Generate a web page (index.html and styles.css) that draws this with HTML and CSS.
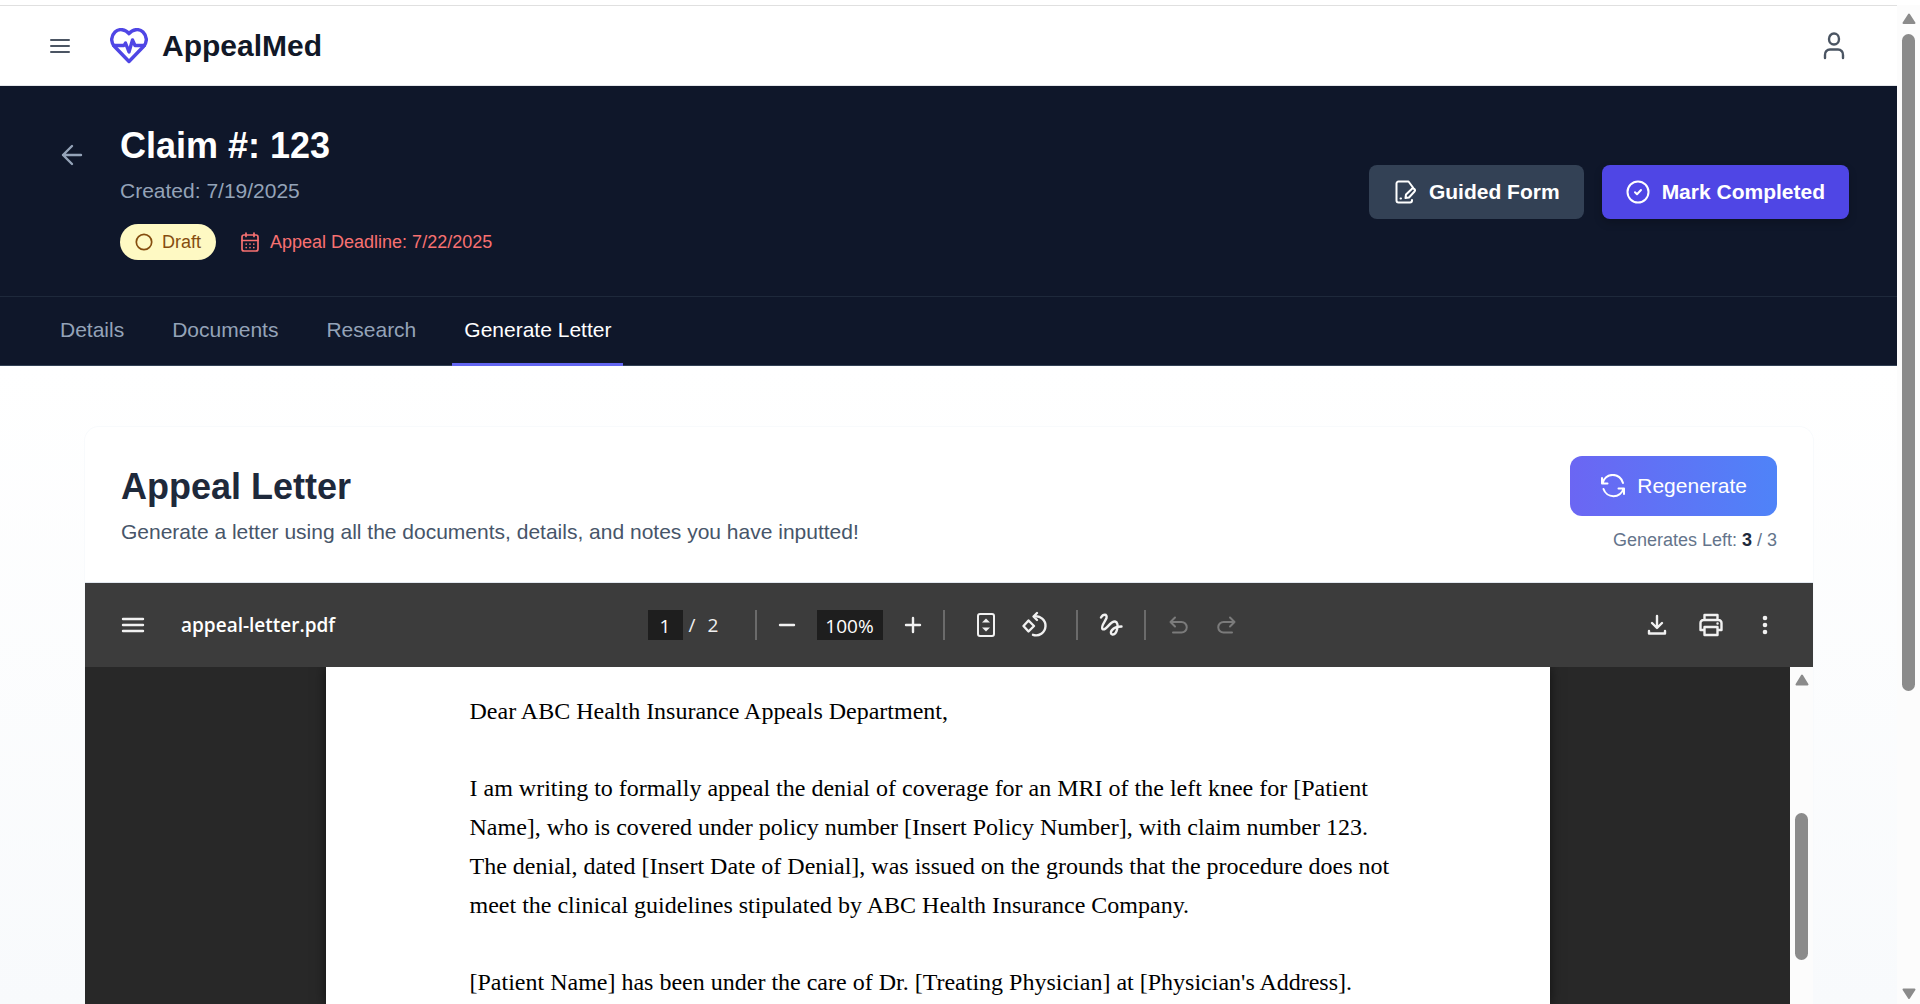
FILE: index.html
```html
<!DOCTYPE html>
<html lang="en">
<head>
<meta charset="utf-8">
<title>AppealMed</title>
<link rel="stylesheet" href="styles.css">
</head>
<body>
<div class="shell">
  <div class="content">
    <header class="topbar">
      <button class="icon-btn" aria-label="Menu">
        <svg width="24" height="24" viewBox="0 0 24 24" class="ico"><path d="M3 6h18M3 12h18M3 18h18"/></svg>
      </button>
      <a class="brand" href="#">
        <svg width="38" height="36" viewBox="0 0 38 36" class="ico ico-heart"><path d="M19 5.600C15.500 1.500 9 0 5 4C0.500 8.500 0.800 14.500 4.500 18.500L19 33.500L33.500 18.500C37.200 14.500 37.500 8.500 33 4C29 0 22.500 1.500 19 5.600Z"/><path d="M3.500 17.500H14L15.500 15L19 24L22.500 12L25 17.500H34.500"/></svg>
        <span>AppealMed</span>
      </a>
      <button class="icon-btn user" aria-label="Account">
        <svg width="30" height="30" viewBox="0 0 30 30" class="ico ico-bold"><ellipse cx="15" cy="8" rx="5" ry="5.500"/><path d="M6 27V24A5 5 0 0 1 11 18.500H19A5 5 0 0 1 24 24V27"/></svg>
      </button>
    </header>

    <section class="claim">
      <div class="claim-head">
        <button class="icon-btn back" aria-label="Back">
          <svg width="30" height="30" viewBox="0 0 30 30" class="ico ico-bold"><path d="M24 15H6M15 6L6 15L15 24"/></svg>
        </button>
        <div class="claim-info">
          <h1>Claim #: 123</h1>
          <p class="created">Created: 7/19/2025</p>
          <div class="status">
            <span class="pill"><svg width="18" height="18" viewBox="0 0 18 18" class="ico ico-thin"><circle cx="9" cy="9" r="7.700"/></svg>Draft</span>
            <span class="deadline"><svg width="20" height="20" viewBox="0 0 20 20" class="ico ico-thin"><rect x="2" y="3" width="16" height="16" rx="2"/><path d="M2 8.500H18M6 1V4.500M14 1V4.500"/><path d="M6.200 12v0.100M10 12v0.100M13.800 12v0.100M6.200 15.500v0.100M10 15.500v0.100M13.800 15.500v0.100"/></svg>Appeal Deadline: 7/22/2025</span>
          </div>
        </div>
        <div class="actions">
          <button class="btn btn-slate"><svg width="24" height="24" viewBox="0 0 24 24" class="ico"><path d="M20 7.500L15.500 1.500H5.500A2 2 0 0 0 3.500 3.500V20.500A2 2 0 0 0 5.500 22.500H17A2 2 0 0 0 19 20.500V20M7.500 18.500H8"/><path d="M12.500 18L13 14.500L18.500 9.200A1.800 1.800 0 0 1 21.500 11.500L16 17.500Z"/></svg>Guided Form</button>
          <button class="btn btn-indigo"><svg width="24" height="24" viewBox="0 0 24 24" class="ico"><circle cx="12" cy="12" r="10.500"/><path d="M9 12.300L11 14.200L15 10"/></svg>Mark Completed</button>
        </div>
      </div>
      <nav class="tabs">
        <a href="#">Details</a>
        <a href="#">Documents</a>
        <a href="#">Research</a>
        <a href="#" class="active" aria-current="page">Generate Letter</a>
      </nav>
    </section>

    <main class="main">
      <section class="card">
        <div class="card-head">
          <div>
            <h2>Appeal Letter</h2>
            <p class="sub">Generate a letter using all the documents, details, and notes you have inputted!</p>
          </div>
          <div class="regen-side">
            <button class="regen"><svg width="26" height="24" viewBox="0 0 26 24" class="ico"><path d="M2 4V9.500H7.500M2.500 9.200A10.500 10.500 0 0 1 23 9"/><path d="M24 20V14.500H18.500M23.500 14.800A10.500 10.500 0 0 1 3.500 15"/></svg>Regenerate</button>
            <p class="left">Generates Left: <strong>3</strong> / 3</p>
          </div>
        </div>

        <div class="pdf-bar">
          <div class="bar-group bar-start">
            <button class="tool" aria-label="Sidebar"><svg width="24" height="24" viewBox="0 0 24 24" class="ico ico-bold"><path d="M2 6h20M2 12h20M2 18h20"/></svg></button>
            <span class="file">appeal-letter.pdf</span>
          </div>
          <div class="bar-group">
            <div class="pager"><input class="page-no" aria-label="Page" value="1"><span>/</span><span>2</span></div>
            <i class="divider"></i>
            <button class="tool tool-wide" aria-label="Zoom out"><svg width="24" height="24" viewBox="0 0 24 24" class="ico ico-bold"><path d="M5 12h14"/></svg></button>
            <input class="zoom-level" aria-label="Zoom level" value="100%">
            <button class="tool tool-wide" aria-label="Zoom in"><svg width="24" height="24" viewBox="0 0 24 24" class="ico ico-bold"><path d="M5 12h14M12 5v14"/></svg></button>
            <i class="divider divider-end"></i>
            <button class="tool" aria-label="Fit to page"><svg width="26" height="26" viewBox="0 0 26 26" class="ico"><rect x="5" y="2" width="16" height="22" rx="2"/><path class="solid" d="M13 6.500L17 10.500H9ZM13 19.500L9 15.500H17Z"/></svg></button>
            <button class="tool" aria-label="Rotate"><svg width="28" height="28" viewBox="0 0 28 28" class="ico ico-bold"><path d="M8.500 9.500L14 15L8.500 20.500L3.500 15ZM14 5.500A9.500 9.500 0 1 1 13 23.800M17 2L13.500 5.500L17 9"/></svg></button>
            <i class="divider divider-mid"></i>
            <button class="tool" aria-label="Draw"><svg width="26" height="26" viewBox="0 0 26 26" class="ico ico-bold"><path d="M3 5.500C5 2 9.500 1.500 8.500 6C7 10 2.500 14 4.500 17C8 20 11.500 9 17 9.500C22 10.500 19 23 14.500 22.500C10.500 21.500 14 14.500 23.500 14.500"/></svg></button>
            <i class="divider divider-pen"></i>
            <button class="tool" disabled aria-label="Undo"><svg width="24" height="24" viewBox="0 0 24 24" class="ico"><path d="M8 4.500L3.500 9L8 13.500M3.500 9H14.500A5.200 5.200 0 0 1 14.500 19.500H6"/></svg></button>
            <button class="tool" disabled aria-label="Redo"><svg width="24" height="24" viewBox="0 0 24 24" class="ico"><path d="M15 4.500L19.500 9L15 13.500M19.500 9H8.500A5.200 5.200 0 0 0 8.500 19.500H17"/></svg></button>
          </div>
          <div class="bar-group bar-end">
            <button class="tool" aria-label="Download"><svg width="24" height="24" viewBox="0 0 24 24" class="ico ico-bold"><path d="M12 3V14.500M7 10L12 15L17 10M4 18V20.500H20V18"/></svg></button>
            <button class="tool" aria-label="Print"><svg width="26" height="26" viewBox="0 0 26 26" class="ico ico-bold"><path d="M6.500 8V3H19.500V8M6.500 18H2.500V11A3 3 0 0 1 5.500 8H20.500A3 3 0 0 1 23.500 11V18H19.500M6.500 15H19.500V23H6.500ZM19.500 11.500h0.100"/></svg></button>
            <button class="tool" aria-label="More"><svg width="24" height="24" viewBox="0 0 24 24"><g fill="currentColor"><circle cx="12" cy="5" r="2.300"/><circle cx="12" cy="12" r="2.300"/><circle cx="12" cy="19" r="2.300"/></g></svg></button>
          </div>
        </div>

        <div class="viewer">
          <div class="canvas">
            <article class="page">
              <p>Dear ABC Health Insurance Appeals Department,</p>
              <p>I am writing to formally appeal the denial of coverage for an MRI of the left knee for [Patient Name], who is covered under policy number [Insert Policy Number], with claim number 123. The denial, dated [Insert Date of Denial], was issued on the grounds that the procedure does not meet the clinical guidelines stipulated by ABC Health Insurance Company.</p>
              <p>[Patient Name] has been under the care of Dr. [Treating Physician] at [Physician's Address].</p>
            </article>
          </div>
          <div class="scroll" aria-hidden="true">
            <svg width="16" height="12" viewBox="0 0 16 12" class="arrow"><path d="M8 1.500L13.500 10.500H2.500Z"/></svg>
            <div class="thumb thumb-pdf"></div>
          </div>
        </div>
      </section>
    </main>
  </div>
  <div class="scroll" aria-hidden="true">
    <svg width="16" height="12" viewBox="0 0 16 12" class="arrow"><path d="M8 2.500L13.500 11H2.500Z"/></svg>
    <div class="thumb"></div>
    <svg width="16" height="12" viewBox="0 0 16 12" class="arrow arrow-down"><path d="M8 10L13.500 1.500H2.500Z"/></svg>
  </div>
</div>
</body>
</html>
```
FILE: styles.css
```css
* { box-sizing: border-box; }
body, h1, h2, p { margin: 0; }
body {
  font-family: "Liberation Sans", Arial, sans-serif;
  font-size: 21px;
  line-height: 30px;
  background: #fff;
  color: #1e293b;
  overflow: hidden;
}
button, input { font: inherit; color: inherit; border: 0; background: none; padding: 0; }
a { color: inherit; text-decoration: none; }
svg { display: block; flex: none; }
.ico { fill: none; stroke: currentColor; stroke-width: 2; stroke-linecap: round; stroke-linejoin: round; }
.ico-thin { stroke-width: 1.7; }
.ico-bold { stroke-width: 2.4; }
.ico-heart { stroke-width: 3.4; color: #4f46e5; }
.solid { fill: currentColor; stroke: none; }

.shell { display: flex; height: 100vh; padding-top: 5px; }
.content {
  flex: 1;
  min-width: 0;
  display: flex;
  flex-direction: column;
  border-top: 1px solid #e0e0e0;
  overflow: hidden;
}

.topbar {
  flex: none;
  display: flex;
  align-items: center;
  height: 80px;
  padding: 0 39px 0 36px;
  border-bottom: 1px solid #e5e7eb;
}
.icon-btn {
  display: grid;
  place-items: center;
  width: 48px;
  height: 48px;
  color: #4b5563;
}
.brand {
  display: flex;
  align-items: center;
  gap: 14px;
  margin-left: 26px;
  font-size: 30px;
  font-weight: 700;
  line-height: 36px;
  color: #111827;
}
.user { margin-left: auto; }

.claim { flex: none; background: #0f172a; color: #fff; }
.claim-head { display: flex; align-items: center; padding: 37px 48px 36px; }
.back { align-self: flex-start; margin: 8px 24px 0 0; color: #94a3b8; }
.claim-info { flex: 1; }
h1, h2 { font-size: 36px; line-height: 45px; font-weight: 700; margin-bottom: 8px; }
.created { color: #94a3b8; margin-bottom: 18px; }
.status { display: flex; align-items: center; gap: 24px; font-size: 18px; line-height: 24px; }
.pill, .deadline { display: flex; align-items: center; gap: 9px; }
.pill { padding: 6px 15px; border-radius: 18px; background: #fef9c3; color: #854d0e; }
.deadline { gap: 10px; color: #f87171; }
.actions { display: flex; gap: 18px; }
.btn {
  display: flex;
  align-items: center;
  gap: 12px;
  height: 54px;
  padding: 0 24px;
  border-radius: 8px;
  font-weight: 700;
}
.btn-slate { background: #334155; }
.btn-indigo { background: #4f46e5; box-shadow: 0 4px 8px rgba(0, 0, 0, 0.2); }

.tabs {
  display: flex;
  gap: 24px;
  padding: 0 48px;
  border-top: 1px solid #1e293b;
  border-bottom: 1px solid #334155;
}
.tabs a {
  padding: 18px 12px;
  border-bottom: 3px solid transparent;
  margin-bottom: -1px;
  color: #94a3b8;
}
.tabs .active { color: #fff; border-bottom-color: #6366f1; }

.main {
  flex: 1;
  min-height: 0;
  display: flex;
  padding: 60px 83px 0 84px;
  background: linear-gradient(#fff, #f8fafc);
}
.card {
  flex: 1;
  min-width: 0;
  display: flex;
  flex-direction: column;
  background: #fff;
  border: 1px solid #f8fafc;
  border-bottom: 0;
  border-radius: 15px 15px 0 0;
}
.card-head {
  flex: none;
  display: flex;
  align-items: center;
  justify-content: space-between;
  padding: 29px 36px 28px;
  border-bottom: 1px solid #e2e8f0;
}
.sub { color: #475569; }
.regen-side { display: flex; flex-direction: column; align-items: flex-end; gap: 11px; }
.regen {
  display: flex;
  align-items: center;
  gap: 11px;
  height: 60px;
  padding: 0 30px;
  border-radius: 12px;
  color: #fff;
  background: linear-gradient(90deg, #6b66f3, #4f83f8);
}
.left { font-size: 18px; line-height: 27px; color: #64748b; }
.left strong { color: #1e293b; }

.pdf-bar {
  flex: none;
  display: grid;
  grid-template-columns: 1fr auto 1fr;
  align-items: center;
  height: 84px;
  padding: 0 24px;
  background: #3c3c3c;
  color: #f1f1f1;
  font-family: "Open Sans", "Noto Sans", sans-serif;
  font-size: 19px;
  line-height: 32px;
}
.bar-group { display: flex; align-items: center; }
.bar-start { gap: 24px; }
.bar-end { gap: 6px; justify-content: flex-end; }
.file { font-weight: 600; color: #fff; }
.tool { display: grid; place-items: center; width: 48px; height: 48px; }
.tool:disabled { color: #7b7b7b; }
.tool-wide { width: 60px; }
.pager { display: flex; align-items: center; width: 107px; }
.pager span { margin-left: 6px; }
.pager span + span { margin-left: 12px; }
.page-no, .zoom-level { height: 30px; padding-top: 2px; background: #1e1e1e; color: #fff; text-align: center; }
.page-no { width: 35px; }
.zoom-level { width: 66px; }
.divider { width: 2px; height: 30px; background: #6b6b6b; }
.divider-end { margin-right: 17px; }
.divider-mid { margin: 0 9px 0 18px; }
.divider-pen { margin: 0 9px; }

.viewer { flex: 1; min-height: 0; display: flex; background: #282828; }
.canvas { flex: 1; display: flex; justify-content: center; overflow: hidden; }
.page {
  width: 1224px;
  padding: 25px 144px;
  background: #fff;
  color: #000;
  box-shadow: 0 0 12px rgba(0, 0, 0, 0.6);
  font-family: "Liberation Serif", "Times New Roman", serif;
  font-size: 24px;
  line-height: 39px;
}
.page p { margin-bottom: 38px; }

.scroll {
  flex: none;
  display: flex;
  flex-direction: column;
  align-items: center;
  width: 23px;
  padding: 7px 0 4px;
  background: #fcfcfc;
}
.arrow { fill: #8b8b8b; stroke: #8b8b8b; stroke-width: 2; stroke-linejoin: round; }
.arrow-down { margin-top: auto; }
.thumb { width: 13px; height: 66.5%; margin-top: 10px; border-radius: 7px; background: #8b8b8b; }
.thumb-pdf { height: 147px; margin-top: 127px; }
```
